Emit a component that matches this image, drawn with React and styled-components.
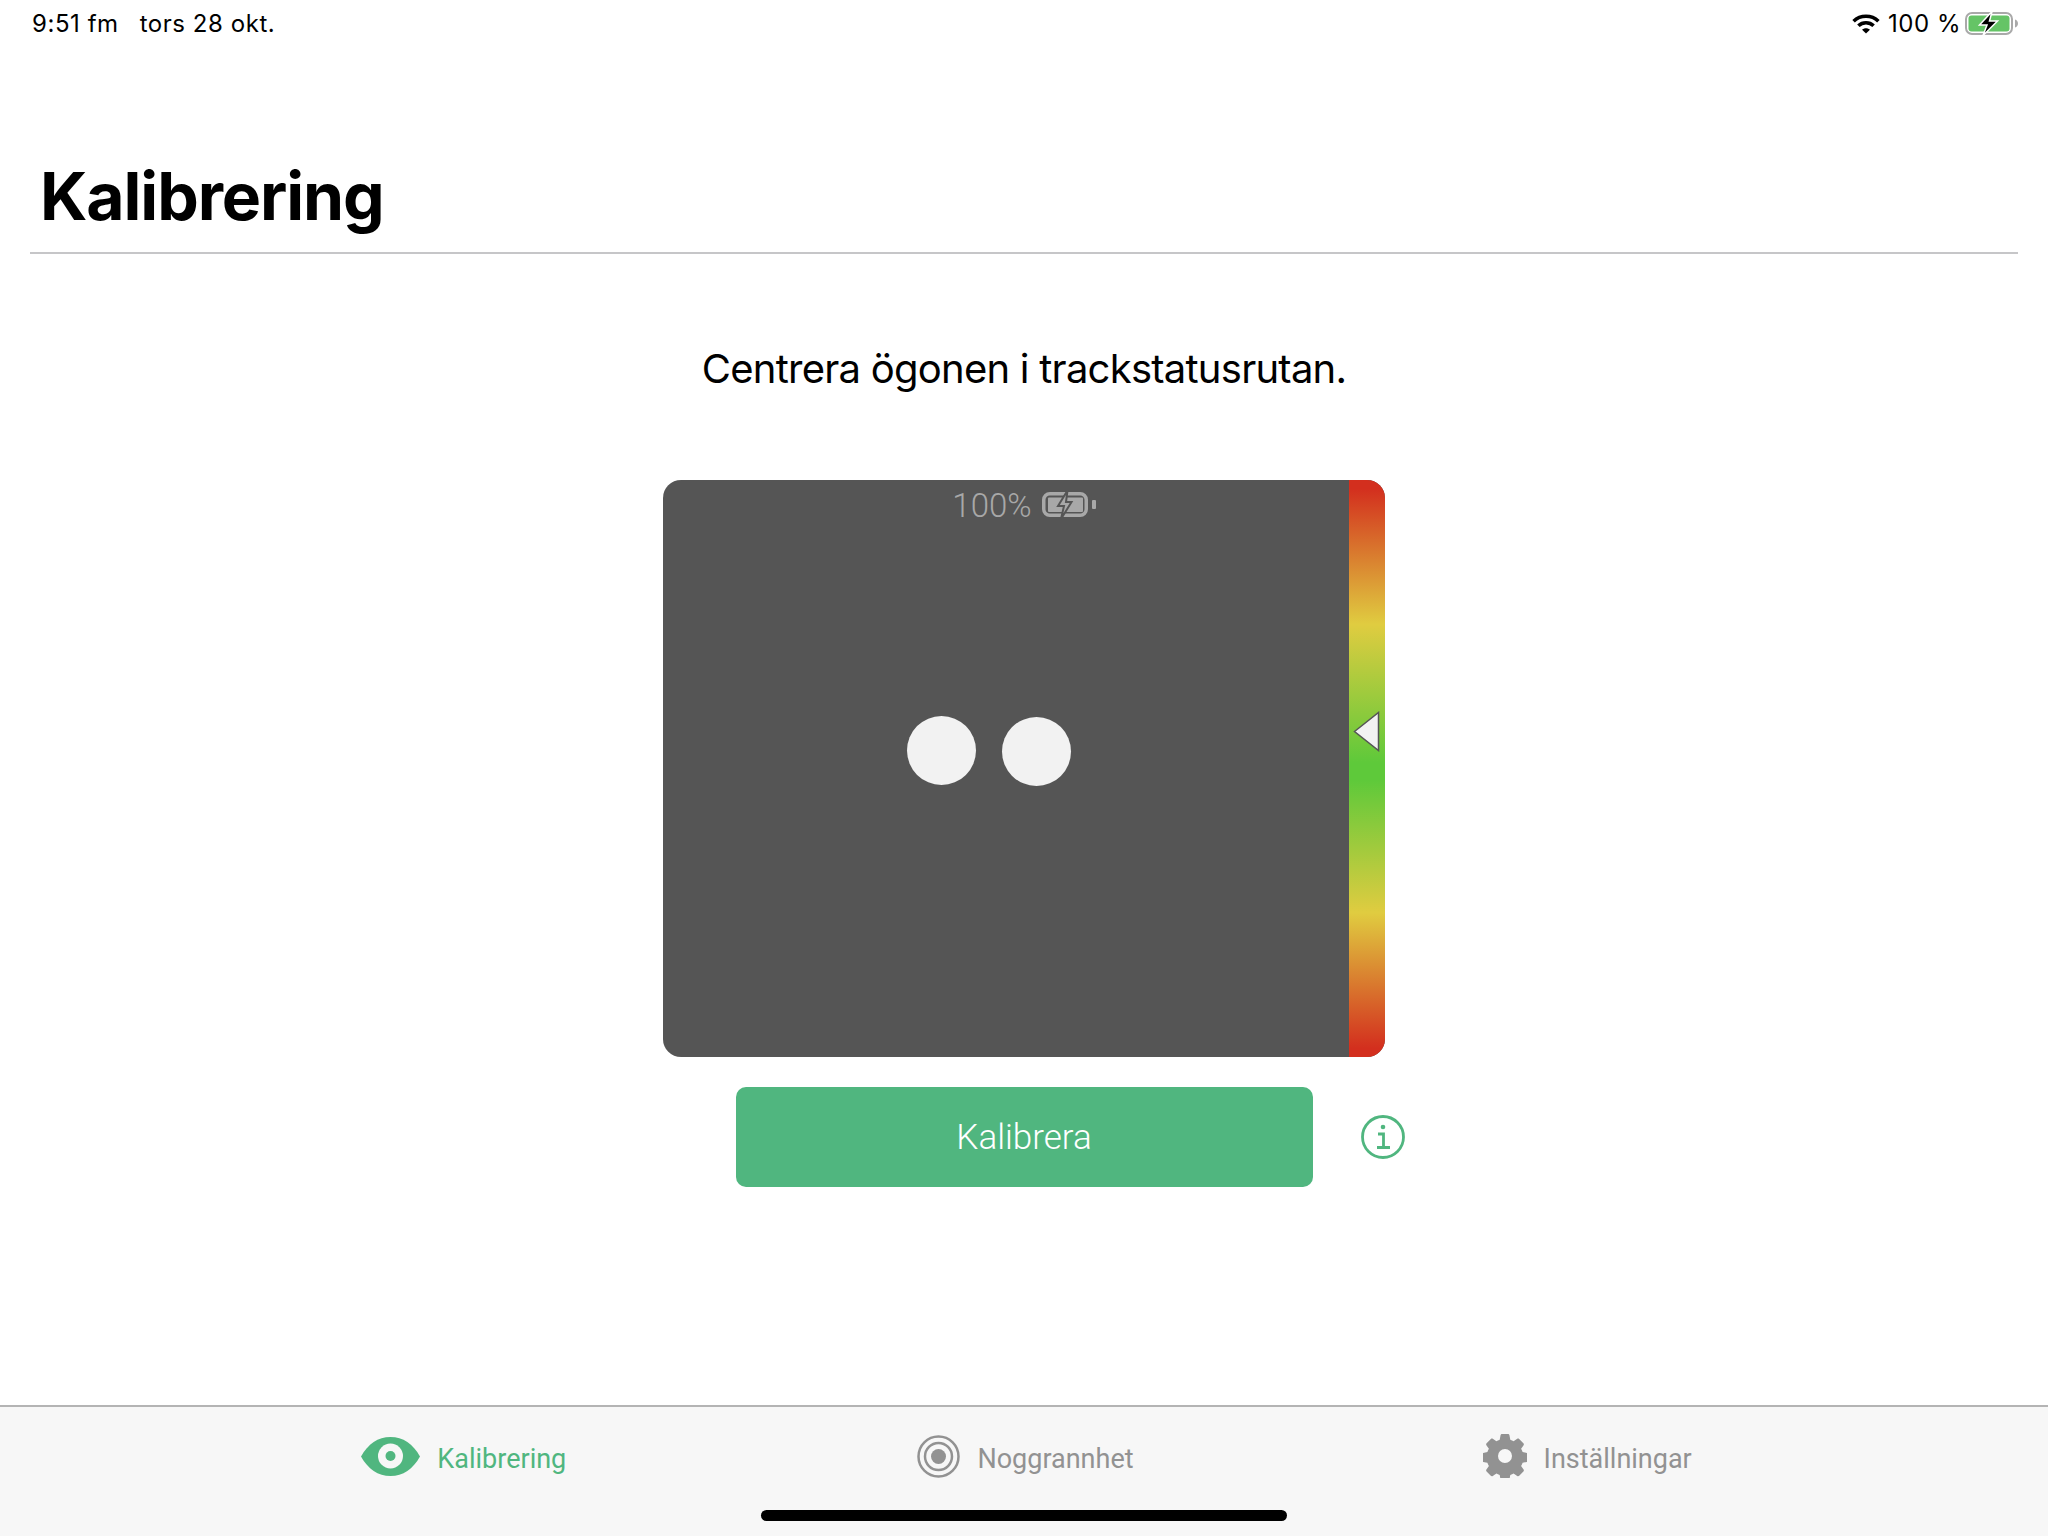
import React from "react";
import styled, { createGlobalStyle } from "styled-components";

const Global = createGlobalStyle`
  html, body { margin: 0; padding: 0; background: #fff; }
  #root { width: 2048px; height: 1536px; }
  * { box-sizing: border-box; }
`;

const Page = styled.div`
  position: relative;
  width: 2048px;
  height: 1536px;
  display: flex;
  flex-direction: column;
  background: #fff;
  overflow: hidden;
  font-family: Inter, "Liberation Sans", sans-serif;
  color: #000;
`;

const StatusBar = styled.div`
  height: 47px;
  padding: 0 30px 0 32px;
  display: flex;
  align-items: center;
  justify-content: space-between;
  font-size: 24px;
  letter-spacing: 0.55px;
`;
const StatusLeft = styled.div`
  display: flex;
  gap: 21px;
`;
const StatusRight = styled.div`
  display: flex;
  align-items: center;
`;
const StatusPercent = styled.span`
  margin: 0 4px 0 8px;
`;

const Header = styled.header`
  height: 207px;
  margin: 0 30px;
  padding: 0 0 16px 10px;
  display: flex;
  align-items: flex-end;
  border-bottom: 2px solid #c6c6c8;
`;
const Title = styled.h1`
  margin: 0;
  font-size: 66px;
  line-height: 80px;
  font-weight: 700;
  letter-spacing: -1.1px;
`;

const Main = styled.main`
  flex: 1;
  display: flex;
  flex-direction: column;
  align-items: center;
`;
const Prompt = styled.p`
  margin: 90px 0 0;
  font-size: 40px;
  line-height: 50px;
  letter-spacing: -0.75px;
`;

const Track = styled.div`
  position: relative;
  width: 722px;
  height: 577px;
  margin-top: 86px;
  display: flex;
  border-radius: 18px;
  overflow: hidden;
  background: #555;
`;
const TrackView = styled.div`
  flex: 1;
  display: flex;
  justify-content: center;
  align-items: flex-start;
  padding-top: 7px;
  gap: 10px;
  margin-left: 36px;
  color: #a8a8a8;
  font-family: Roboto, sans-serif;
  font-weight: 300;
  font-size: 33px;
  line-height: 38px;
`;
const DeviceBattery = styled.span`
  display: inline-flex;
  align-items: center;
  height: 36px;
`;
const Gauge = styled.div`
  width: 36px;
  background: linear-gradient(
    to bottom,
    #d32f1e 0%,
    #d32f1e 1.5%,
    #e0cc40 25%,
    #5ec93a 49%,
    #5ec93a 52%,
    #e0cc40 75%,
    #d32f1e 98.5%,
    #d32f1e 100%
  );
`;
const Eye = styled.div`
  position: absolute;
  left: ${(p) => p.$x}px;
  top: ${(p) => p.$y}px;
  width: 69px;
  height: 69px;
  border-radius: 50%;
  background: #f2f2f2;
`;
const Marker = styled.svg`
  position: absolute;
  left: 690px;
  top: 231px;
`;

const ActionRow = styled.div`
  display: grid;
  grid-template-columns: 1fr 577px 1fr;
  align-items: center;
  width: 100%;
  margin-top: 30px;
`;
const CalibrateButton = styled.button`
  grid-column: 2;
  height: 100px;
  border: 0;
  border-radius: 10px;
  background: #50b67f;
  color: #fff;
  font-family: Roboto, sans-serif;
  font-weight: 300;
  font-size: 35px;
`;
const InfoIcon = styled.svg`
  margin-left: 48px;
`;

const TabBar = styled.nav`
  height: 131px;
  padding: 0 180px 31px 183px;
  display: grid;
  grid-template-columns: repeat(3, 1fr);
  align-items: center;
  background: #f7f7f7;
  border-top: 2px solid #b4b4b4;
`;
const Tab = styled.div`
  display: flex;
  justify-content: center;
  align-items: center;
  gap: 17px;
  font-family: Roboto, sans-serif;
  font-size: 27px;
  letter-spacing: 0;
  color: ${(p) => (p.$active ? "#50b67f" : "#929292")};
`;
const TabLabel = styled.span`
  margin-top: 6px;
`;
const HomeIndicator = styled.div`
  position: absolute;
  left: 761px;
  bottom: 15px;
  width: 526px;
  height: 11px;
  border-radius: 6px;
  background: #000;
`;

const WifiIcon = () => (
  <svg width="28" height="20" viewBox="0 0 28 20" fill="none" stroke="#000" strokeWidth="3.6">
    <path d="M1.6 7.2C8.4 .6 19.6 .6 26.4 7.2" />
    <path d="M6.4 11.8c4.2-4 11-4 15.2 0" />
    <path d="M14 19.6l-3.9-3.9c2.1-2 5.7-2 7.8 0z" fill="#000" stroke="none" />
  </svg>
);

const StatusBattery = () => (
  <svg width="53" height="25" viewBox="0 0 53 25">
    <rect x="1" y="2" width="46" height="21" rx="6" fill="none" stroke="#a9a9a9" strokeWidth="2" />
    <rect x="3.500" y="4.500" width="41" height="16" rx="3" fill="#65c466" />
    <path d="M50 8.500c1.800.5 3 2.200 3 4s-1.200 3.500-3 4z" fill="#a9a9a9" />
    <path d="M27 0.500 L14.500 14 H22 L18 24.500 L32.500 10 H24.500 Z" fill="#000" stroke="#fff" strokeWidth="1.500" />
  </svg>
);

const TrackerBattery = () => (
  <svg width="54" height="30" viewBox="0 0 54 30" fill="#a8a8a8">
    <rect x="1.750" y="3.750" width="42.500" height="21.500" rx="6" fill="none" stroke="#a8a8a8" strokeWidth="3.500" />
    <rect x="6" y="7.500" width="35" height="14.500" rx="1" />
    <rect x="50" y="10" width="4" height="9" rx="1" />
    <path d="M25.500 0.500 L16 16 H22 L19 29 L29.500 12 H24 Z" stroke="#555" strokeWidth="2" />
  </svg>
);

const EyeTabIcon = () => (
  <svg width="59" height="39" viewBox="0 0 59 39">
    <path d="M0 19.500C7 7 17 0 29.500 0s22.500 7 29.500 19.500C52 32 42 39 29.500 39S7 32 0 19.500z" fill="#50b67f" />
    <circle cx="29.500" cy="19" r="12.500" fill="#f7f7f7" />
    <circle cx="29.500" cy="19" r="5" fill="#50b67f" />
  </svg>
);

const TargetIcon = () => (
  <svg width="43" height="43" viewBox="0 0 43 43" fill="none" stroke="#929292" strokeWidth="2.500">
    <circle cx="21.500" cy="21.500" r="20" />
    <circle cx="21.500" cy="21.500" r="13.500" />
    <circle cx="21.500" cy="21.500" r="7.500" fill="#929292" stroke="none" />
  </svg>
);

const GearIcon = () => (
  <svg width="44" height="44" viewBox="0 0 44 44" fill="#929292">
    <path
      fillRule="evenodd"
      d="M17.500 1.500c0-.8.700-1.500 1.500-1.500h6c.8 0 1.500.7 1.500 1.500l.8 4.300c1.200.4 2.300.9 3.300 1.500l3.600-2.500c.6-.4 1.400-.4 2 .2l4.200 4.200c.6.600.6 1.400.2 2l-2.500 3.600c.6 1 1.100 2.100 1.500 3.300l4.300.8c.8 0 1.500.7 1.500 1.500v6c0 .8-.7 1.500-1.500 1.500l-4.300.8c-.4 1.200-.9 2.300-1.500 3.300l2.500 3.600c.4.600.4 1.400-.2 2l-4.200 4.200c-.6.600-1.400.6-2 .2l-3.600-2.500c-1 .6-2.100 1.100-3.300 1.500l-.8 4.300c0 .8-.7 1.500-1.500 1.500h-6c-.8 0-1.500-.7-1.500-1.500l-.8-4.300c-1.200-.4-2.300-.9-3.300-1.500l-3.600 2.500c-.6.400-1.400.4-2-.2l-4.200-4.200c-.6-.6-.6-1.400-.2-2l2.500-3.600c-.6-1-1.100-2.100-1.500-3.300l-4.300-.8c-.8 0-1.500-.7-1.500-1.500v-6c0-.8.700-1.500 1.500-1.500l4.300-.8c.4-1.200.9-2.300 1.500-3.300l-2.500-3.600c-.4-.6-.4-1.400.2-2l4.200-4.200c.6-.6 1.400-.6 2-.2l3.600 2.500c1-.6 2.100-1.100 3.300-1.500zM22 15a7 7 0 1 0 0 14 7 7 0 0 0 0-14z"
    />
  </svg>
);

export default function App() {
  return (
    <Page>
      <Global />
      <StatusBar>
        <StatusLeft>
          <span>9:51 fm</span>
          <span>tors 28 okt.</span>
        </StatusLeft>
        <StatusRight>
          <WifiIcon />
          <StatusPercent>100 %</StatusPercent>
          <StatusBattery />
        </StatusRight>
      </StatusBar>
      <Header>
        <Title>Kalibrering</Title>
      </Header>
      <Main>
        <Prompt>Centrera ögonen i trackstatusrutan.</Prompt>
        <Track>
          <TrackView>
            <span>100%</span>
            <DeviceBattery>
              <TrackerBattery />
            </DeviceBattery>
          </TrackView>
          <Gauge />
          <Eye $x={244} $y={236} />
          <Eye $x={339} $y={237} />
          <Marker width="27" height="41" viewBox="0 0 27 41">
            <path d="M1.500 20.500L25.500 1.500V39.500Z" fill="#f2f2f2" stroke="#555" strokeWidth="1.500" />
          </Marker>
        </Track>
        <ActionRow>
          <CalibrateButton>Kalibrera</CalibrateButton>
          <InfoIcon width="44" height="44" viewBox="0 0 44 44" fill="none" stroke="#50b67f">
            <circle cx="22" cy="22" r="20.500" strokeWidth="2.800" />
            <circle cx="22" cy="12" r="2.300" fill="#50b67f" stroke="none" />
            <path d="M17 19h5.500v13M16 32.500h13" strokeWidth="2.800" />
          </InfoIcon>
        </ActionRow>
      </Main>
      <TabBar>
        <Tab $active>
          <EyeTabIcon />
          <TabLabel>Kalibrering</TabLabel>
        </Tab>
        <Tab>
          <TargetIcon />
          <TabLabel>Noggrannhet</TabLabel>
        </Tab>
        <Tab>
          <GearIcon />
          <TabLabel>Inställningar</TabLabel>
        </Tab>
      </TabBar>
      <HomeIndicator />
    </Page>
  );
}
